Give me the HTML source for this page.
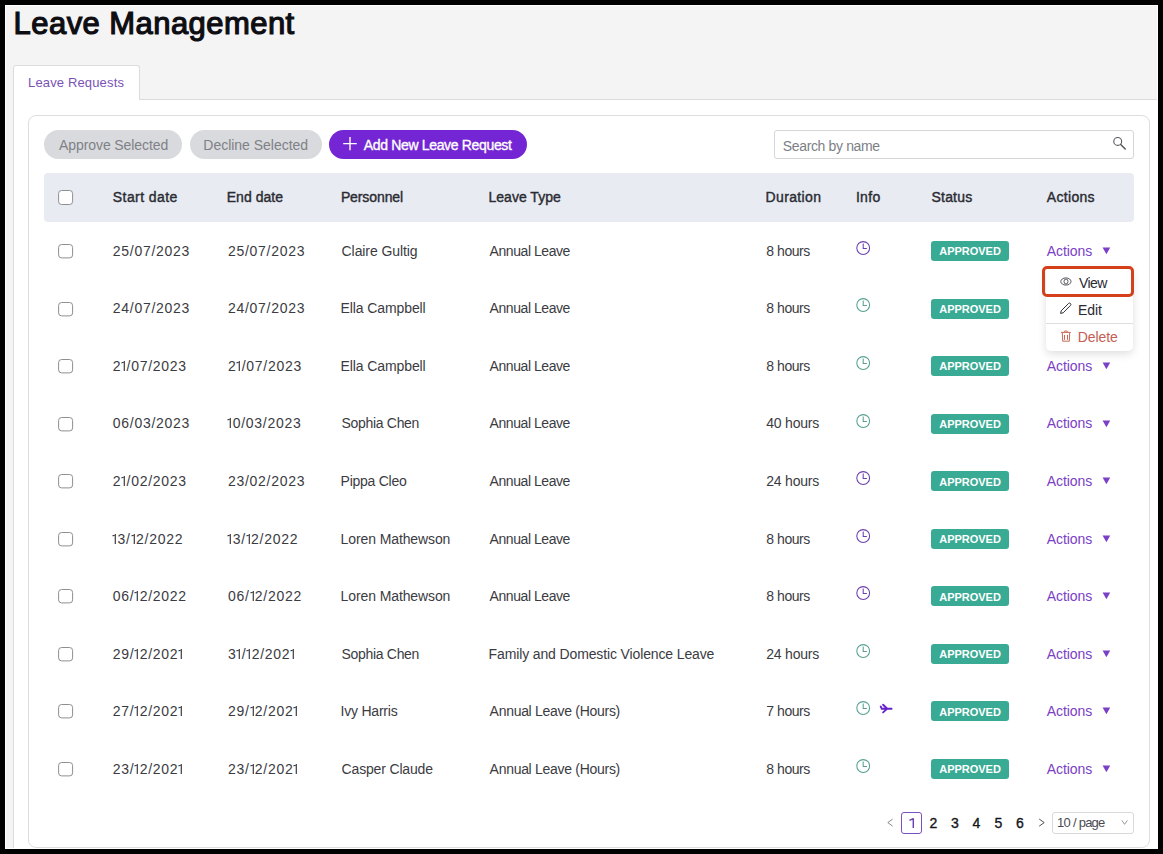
<!DOCTYPE html>
<html><head><meta charset="utf-8"><title>Leave Management</title>
<style>
*{box-sizing:border-box;margin:0;padding:0}
html,body{width:1163px;height:854px;overflow:hidden;background:#000}
body{position:relative;font-family:"Liberation Sans",sans-serif}
.a{position:absolute}
.t{position:absolute;white-space:nowrap}
.one{display:inline-block;vertical-align:baseline;overflow:visible}
.badge{left:931px;width:78px;height:20px;background:#39aa94;border-radius:3px}
</style></head>
<body>
<div class="a" style="left:5px;top:5px;width:1153px;height:844px;background:#f4f4f5"></div>
<div class="a" style="left:13px;top:99px;width:1150px;height:760px;background:#fff;border-top:1px solid #dcdcdc;border-left:1px solid #dcdcdc"></div>
<div class="a" style="left:13px;top:65px;width:127px;height:35px;background:#fff;border:1px solid #dcdcdc;border-bottom:none;border-radius:3px 3px 0 0"></div>
<div class="a" style="left:28px;top:115px;width:1122px;height:733px;background:#fff;border:1px solid #dedede;border-radius:8px"></div>
<div class="a" style="left:44px;top:130px;width:138px;height:29px;border-radius:15px;background:#d9dadd"></div>
<div class="a" style="left:190px;top:130px;width:132px;height:29px;border-radius:15px;background:#d9dadd"></div>
<div class="a" style="left:329px;top:130px;width:198px;height:29px;border-radius:15px;background:#7526d4"></div>
<svg class="a" style="left:342px;top:136px" width="16" height="16" viewBox="0 0 16 16"><path d="M8 1V14.2M1.2 7.6H14.8" stroke="#fff" stroke-width="1.4"/></svg>
<div class="a" style="left:774px;top:130px;width:360px;height:29px;border:1px solid #d6d6d9;border-radius:3px;background:#fff"></div>
<svg class="a" style="left:1110px;top:134px" width="20" height="20" viewBox="0 0 20 20"><circle cx="7.7" cy="7.4" r="3.95" fill="none" stroke="#57575e" stroke-width="1.1"/><path d="M10.7 10.5L15.2 15" stroke="#57575e" stroke-width="1.5" stroke-linecap="round"/></svg>
<div class="a" style="left:44px;top:173px;width:1090px;height:49px;background:#e8ecf2;border-radius:4px"></div>
<svg class="a" style="left:57px;top:189px" width="17" height="17" viewBox="0 0 17 17"><rect x="1.6" y="1.5" width="14" height="14" rx="3" fill="#fff" stroke="#8e8e93" stroke-width="1"/></svg>
<svg class="a" style="left:57px;top:243.00px" width="17" height="16" viewBox="0 0 17 16"><rect x="1.6" y="1.5" width="14" height="13.4" rx="3" fill="#fff" stroke="#8e8e93" stroke-width="1"/></svg>
<svg class="a" style="left:855px;top:239.90px" width="16" height="16" viewBox="0 0 16 16"><circle cx="8.2" cy="8" r="6.4" fill="none" stroke="#6c3fae" stroke-width="1.05"/><path d="M8.2 3.4V8.5H11.9" fill="none" stroke="#6c3fae" stroke-width="1.05"/></svg>
<div class="a badge" style="top:241.00px"></div>
<svg class="a" style="left:1102px;top:247.00px" width="9" height="8" viewBox="0 0 9 8"><path d="M0.6 0.4H8.2L4.4 7.2Z" fill="#7a40c6"/></svg>
<svg class="a" style="left:57px;top:300.56px" width="17" height="16" viewBox="0 0 17 16"><rect x="1.6" y="1.5" width="14" height="13.4" rx="3" fill="#fff" stroke="#8e8e93" stroke-width="1"/></svg>
<svg class="a" style="left:855px;top:297.46px" width="16" height="16" viewBox="0 0 16 16"><circle cx="8.2" cy="8" r="6.4" fill="none" stroke="#58a093" stroke-width="1.05"/><path d="M8.2 3.4V8.5H11.9" fill="none" stroke="#58a093" stroke-width="1.05"/></svg>
<div class="a badge" style="top:298.56px"></div>
<svg class="a" style="left:57px;top:358.12px" width="17" height="16" viewBox="0 0 17 16"><rect x="1.6" y="1.5" width="14" height="13.4" rx="3" fill="#fff" stroke="#8e8e93" stroke-width="1"/></svg>
<svg class="a" style="left:855px;top:355.02px" width="16" height="16" viewBox="0 0 16 16"><circle cx="8.2" cy="8" r="6.4" fill="none" stroke="#58a093" stroke-width="1.05"/><path d="M8.2 3.4V8.5H11.9" fill="none" stroke="#58a093" stroke-width="1.05"/></svg>
<div class="a badge" style="top:356.12px"></div>
<svg class="a" style="left:1102px;top:362.12px" width="9" height="8" viewBox="0 0 9 8"><path d="M0.6 0.4H8.2L4.4 7.2Z" fill="#7a40c6"/></svg>
<svg class="a" style="left:57px;top:415.68px" width="17" height="16" viewBox="0 0 17 16"><rect x="1.6" y="1.5" width="14" height="13.4" rx="3" fill="#fff" stroke="#8e8e93" stroke-width="1"/></svg>
<svg class="a" style="left:855px;top:412.58px" width="16" height="16" viewBox="0 0 16 16"><circle cx="8.2" cy="8" r="6.4" fill="none" stroke="#58a093" stroke-width="1.05"/><path d="M8.2 3.4V8.5H11.9" fill="none" stroke="#58a093" stroke-width="1.05"/></svg>
<div class="a badge" style="top:413.68px"></div>
<svg class="a" style="left:1102px;top:419.68px" width="9" height="8" viewBox="0 0 9 8"><path d="M0.6 0.4H8.2L4.4 7.2Z" fill="#7a40c6"/></svg>
<svg class="a" style="left:57px;top:473.24px" width="17" height="16" viewBox="0 0 17 16"><rect x="1.6" y="1.5" width="14" height="13.4" rx="3" fill="#fff" stroke="#8e8e93" stroke-width="1"/></svg>
<svg class="a" style="left:855px;top:470.14px" width="16" height="16" viewBox="0 0 16 16"><circle cx="8.2" cy="8" r="6.4" fill="none" stroke="#6c3fae" stroke-width="1.05"/><path d="M8.2 3.4V8.5H11.9" fill="none" stroke="#6c3fae" stroke-width="1.05"/></svg>
<div class="a badge" style="top:471.24px"></div>
<svg class="a" style="left:1102px;top:477.24px" width="9" height="8" viewBox="0 0 9 8"><path d="M0.6 0.4H8.2L4.4 7.2Z" fill="#7a40c6"/></svg>
<svg class="a" style="left:57px;top:530.80px" width="17" height="16" viewBox="0 0 17 16"><rect x="1.6" y="1.5" width="14" height="13.4" rx="3" fill="#fff" stroke="#8e8e93" stroke-width="1"/></svg>
<svg class="a" style="left:855px;top:527.70px" width="16" height="16" viewBox="0 0 16 16"><circle cx="8.2" cy="8" r="6.4" fill="none" stroke="#6c3fae" stroke-width="1.05"/><path d="M8.2 3.4V8.5H11.9" fill="none" stroke="#6c3fae" stroke-width="1.05"/></svg>
<div class="a badge" style="top:528.80px"></div>
<svg class="a" style="left:1102px;top:534.80px" width="9" height="8" viewBox="0 0 9 8"><path d="M0.6 0.4H8.2L4.4 7.2Z" fill="#7a40c6"/></svg>
<svg class="a" style="left:57px;top:588.36px" width="17" height="16" viewBox="0 0 17 16"><rect x="1.6" y="1.5" width="14" height="13.4" rx="3" fill="#fff" stroke="#8e8e93" stroke-width="1"/></svg>
<svg class="a" style="left:855px;top:585.26px" width="16" height="16" viewBox="0 0 16 16"><circle cx="8.2" cy="8" r="6.4" fill="none" stroke="#6c3fae" stroke-width="1.05"/><path d="M8.2 3.4V8.5H11.9" fill="none" stroke="#6c3fae" stroke-width="1.05"/></svg>
<div class="a badge" style="top:586.36px"></div>
<svg class="a" style="left:1102px;top:592.36px" width="9" height="8" viewBox="0 0 9 8"><path d="M0.6 0.4H8.2L4.4 7.2Z" fill="#7a40c6"/></svg>
<svg class="a" style="left:57px;top:645.92px" width="17" height="16" viewBox="0 0 17 16"><rect x="1.6" y="1.5" width="14" height="13.4" rx="3" fill="#fff" stroke="#8e8e93" stroke-width="1"/></svg>
<svg class="a" style="left:855px;top:642.82px" width="16" height="16" viewBox="0 0 16 16"><circle cx="8.2" cy="8" r="6.4" fill="none" stroke="#58a093" stroke-width="1.05"/><path d="M8.2 3.4V8.5H11.9" fill="none" stroke="#58a093" stroke-width="1.05"/></svg>
<div class="a badge" style="top:643.92px"></div>
<svg class="a" style="left:1102px;top:649.92px" width="9" height="8" viewBox="0 0 9 8"><path d="M0.6 0.4H8.2L4.4 7.2Z" fill="#7a40c6"/></svg>
<svg class="a" style="left:57px;top:703.48px" width="17" height="16" viewBox="0 0 17 16"><rect x="1.6" y="1.5" width="14" height="13.4" rx="3" fill="#fff" stroke="#8e8e93" stroke-width="1"/></svg>
<svg class="a" style="left:855px;top:700.38px" width="16" height="16" viewBox="0 0 16 16"><circle cx="8.2" cy="8" r="6.4" fill="none" stroke="#58a093" stroke-width="1.05"/><path d="M8.2 3.4V8.5H11.9" fill="none" stroke="#58a093" stroke-width="1.05"/></svg>
<svg class="a" style="left:879px;top:702.38px" width="15" height="13" viewBox="0 0 15 13"><path d="M2.6 6.7H12.6M4.1 2.7L8 6.5M8 6.9L4.1 10.4M1.7 4.5L2.8 6.7" fill="none" stroke="#6623c9" stroke-width="1.9" stroke-linecap="round" stroke-linejoin="round"/></svg>
<div class="a badge" style="top:701.48px"></div>
<svg class="a" style="left:1102px;top:707.48px" width="9" height="8" viewBox="0 0 9 8"><path d="M0.6 0.4H8.2L4.4 7.2Z" fill="#7a40c6"/></svg>
<svg class="a" style="left:57px;top:761.04px" width="17" height="16" viewBox="0 0 17 16"><rect x="1.6" y="1.5" width="14" height="13.4" rx="3" fill="#fff" stroke="#8e8e93" stroke-width="1"/></svg>
<svg class="a" style="left:855px;top:757.94px" width="16" height="16" viewBox="0 0 16 16"><circle cx="8.2" cy="8" r="6.4" fill="none" stroke="#58a093" stroke-width="1.05"/><path d="M8.2 3.4V8.5H11.9" fill="none" stroke="#58a093" stroke-width="1.05"/></svg>
<div class="a badge" style="top:759.04px"></div>
<svg class="a" style="left:1102px;top:765.04px" width="9" height="8" viewBox="0 0 9 8"><path d="M0.6 0.4H8.2L4.4 7.2Z" fill="#7a40c6"/></svg>
<div class="a" style="left:1046px;top:267px;width:87px;height:84px;background:#fff;border-radius:5px;box-shadow:0 3px 8px rgba(0,0,0,0.13)"></div>
<div class="a" style="left:1046px;top:323px;width:87px;height:1px;background:#dedede"></div>
<div class="a" style="left:1042px;top:266px;width:92px;height:31px;border:3px solid #d4401a;border-radius:5px"></div>
<svg class="a" style="left:1059px;top:277px" width="14" height="10" viewBox="0 0 14 10"><ellipse cx="6.9" cy="4.5" rx="5.1" ry="3.6" fill="none" stroke="#3c3c44" stroke-width="0.85"/><ellipse cx="7" cy="4.5" rx="2" ry="2.5" fill="none" stroke="#3c3c44" stroke-width="0.85"/></svg>
<svg class="a" style="left:1059px;top:301.3px" width="14" height="14" viewBox="0 0 14 14"><path d="M1.6 12.4L2.2 9.8L9.6 2.4Q10.6 1.6 11.5 2.5Q12.3 3.4 11.6 4.3L4.2 11.8Z" fill="none" stroke="#2f2f36" stroke-width="1"/></svg>
<svg class="a" style="left:1060px;top:330px" width="12" height="13" viewBox="0 0 12 13"><path d="M1 2.4H10.8M4.4 2.2V1.4Q4.4 1 4.8 1H6.9Q7.3 1 7.3 1.4V2.2M2.3 2.8L2.7 11.2H9.3L9.7 2.8M4.5 4.9V9.8M7.5 4.9V9.8" fill="none" stroke="#c7604f" stroke-width="0.95"/></svg>
<svg class="a" style="left:886px;top:817px" width="9" height="11" viewBox="0 0 9 11"><path d="M6.6 2.1L1.8 5.6L6.6 9.1" fill="none" stroke="#7a7a80" stroke-width="0.9"/></svg>
<div class="a" style="left:901px;top:812px;width:21px;height:22px;border:1px solid #7b4fc0;border-radius:3px"></div>
<svg class="a" style="left:1037px;top:817px" width="9" height="11" viewBox="0 0 9 11"><path d="M2.2 2L7.2 5.6L2.2 9.2" fill="none" stroke="#3a3a40" stroke-width="0.9"/></svg>
<div class="a" style="left:1052px;top:812px;width:82px;height:22px;border:1px solid #d9d9dc;border-radius:3px"></div>
<svg class="a" style="left:1120px;top:819px" width="9" height="8" viewBox="0 0 9 8"><path d="M1.8 1.4L4.6 5.3L7.4 1.4" fill="none" stroke="#85858b" stroke-width="0.85"/></svg>
<div class="t" style="left:13.60px;top:4.16px;font-size:31px;line-height:39px;font-weight:normal;color:#0d0d12;letter-spacing:0.440px;-webkit-text-stroke:1.2px #0d0d12;">Leave Management</div>
<div class="t" style="left:28.00px;top:74.50px;font-size:13px;line-height:16px;font-weight:normal;color:#7a52b4;letter-spacing:0.150px;">Leave Requests</div>
<div class="t" style="left:59.10px;top:135.85px;font-size:14px;line-height:18px;font-weight:normal;color:#7f8187;letter-spacing:-0.095px;">Approve Selected</div>
<div class="t" style="left:203.30px;top:135.85px;font-size:14px;line-height:18px;font-weight:normal;color:#7f8187;letter-spacing:-0.018px;">Decline Selected</div>
<div class="t" style="left:363.80px;top:135.65px;font-size:14px;line-height:18px;font-weight:normal;color:#ffffff;letter-spacing:-0.339px;-webkit-text-stroke:0.35px #fff;">Add New Leave Request</div>
<div class="t" style="left:782.80px;top:136.75px;font-size:14px;line-height:18px;font-weight:normal;color:#7d7f86;letter-spacing:-0.358px;">Search by name</div>
<div class="t" style="left:112.80px;top:188.15px;font-size:14px;line-height:18px;font-weight:normal;color:#2b2b33;letter-spacing:0.431px;-webkit-text-stroke:0.4px #2b2b33;">Start date</div>
<div class="t" style="left:226.70px;top:188.15px;font-size:14px;line-height:18px;font-weight:normal;color:#2b2b33;letter-spacing:0.048px;-webkit-text-stroke:0.4px #2b2b33;">End date</div>
<div class="t" style="left:340.90px;top:188.15px;font-size:14px;line-height:18px;font-weight:normal;color:#2b2b33;letter-spacing:-0.104px;-webkit-text-stroke:0.4px #2b2b33;">Personnel</div>
<div class="t" style="left:488.50px;top:188.15px;font-size:14px;line-height:18px;font-weight:normal;color:#2b2b33;letter-spacing:0.011px;-webkit-text-stroke:0.4px #2b2b33;">Leave Type</div>
<div class="t" style="left:765.60px;top:188.15px;font-size:14px;line-height:18px;font-weight:normal;color:#2b2b33;letter-spacing:0.353px;-webkit-text-stroke:0.4px #2b2b33;">Duration</div>
<div class="t" style="left:855.90px;top:188.15px;font-size:14px;line-height:18px;font-weight:normal;color:#2b2b33;letter-spacing:0.312px;-webkit-text-stroke:0.4px #2b2b33;">Info</div>
<div class="t" style="left:931.50px;top:188.15px;font-size:14px;line-height:18px;font-weight:normal;color:#2b2b33;letter-spacing:0.202px;-webkit-text-stroke:0.4px #2b2b33;">Status</div>
<div class="t" style="left:1046.80px;top:188.15px;font-size:14px;line-height:18px;font-weight:normal;color:#2b2b33;letter-spacing:0.315px;-webkit-text-stroke:0.4px #2b2b33;">Actions</div>
<div class="t" style="left:112.80px;top:241.75px;font-size:14px;line-height:18px;font-weight:normal;color:#3b3b42;letter-spacing:0.720px;">25/07/2023</div>
<div class="t" style="left:227.90px;top:241.75px;font-size:14px;line-height:18px;font-weight:normal;color:#3b3b42;letter-spacing:0.720px;">25/07/2023</div>
<div class="t" style="left:341.60px;top:241.75px;font-size:14px;line-height:18px;font-weight:normal;color:#3b3b42;letter-spacing:-0.087px;">Claire Gultig</div>
<div class="t" style="left:489.60px;top:241.75px;font-size:14px;line-height:18px;font-weight:normal;color:#3b3b42;letter-spacing:-0.440px;">Annual Leave</div>
<div class="t" style="left:766.30px;top:241.75px;font-size:14px;line-height:18px;font-weight:normal;color:#3b3b42;letter-spacing:-0.449px;">8 hours</div>
<div class="t" style="left:1046.70px;top:241.75px;font-size:14px;line-height:18px;font-weight:normal;color:#7a40c6;letter-spacing:-0.068px;">Actions</div>
<div class="t" style="left:939.30px;top:244.29px;font-size:11px;line-height:14px;font-weight:bold;color:#ffffff;letter-spacing:-0.027px;">APPROVED</div>
<div class="t" style="left:112.80px;top:299.31px;font-size:14px;line-height:18px;font-weight:normal;color:#3b3b42;letter-spacing:0.720px;">24/07/2023</div>
<div class="t" style="left:227.90px;top:299.31px;font-size:14px;line-height:18px;font-weight:normal;color:#3b3b42;letter-spacing:0.720px;">24/07/2023</div>
<div class="t" style="left:340.60px;top:299.31px;font-size:14px;line-height:18px;font-weight:normal;color:#3b3b42;letter-spacing:-0.105px;">Ella Campbell</div>
<div class="t" style="left:489.60px;top:299.31px;font-size:14px;line-height:18px;font-weight:normal;color:#3b3b42;letter-spacing:-0.440px;">Annual Leave</div>
<div class="t" style="left:766.30px;top:299.31px;font-size:14px;line-height:18px;font-weight:normal;color:#3b3b42;letter-spacing:-0.449px;">8 hours</div>
<div class="t" style="left:939.30px;top:301.85px;font-size:11px;line-height:14px;font-weight:bold;color:#ffffff;letter-spacing:-0.027px;">APPROVED</div>
<div class="t" style="left:112.80px;top:356.87px;font-size:14px;line-height:18px;font-weight:normal;color:#3b3b42;letter-spacing:0.720px;">2<svg class="one" width="5.3" height="10" viewBox="0 0 5.3 10"><path d="M3.3 0.1V10M3.4 0.5L0.5 2" fill="none" stroke="currentColor" stroke-width="1.2"/></svg>/07/2023</div>
<div class="t" style="left:227.90px;top:356.87px;font-size:14px;line-height:18px;font-weight:normal;color:#3b3b42;letter-spacing:0.720px;">2<svg class="one" width="5.3" height="10" viewBox="0 0 5.3 10"><path d="M3.3 0.1V10M3.4 0.5L0.5 2" fill="none" stroke="currentColor" stroke-width="1.2"/></svg>/07/2023</div>
<div class="t" style="left:340.60px;top:356.87px;font-size:14px;line-height:18px;font-weight:normal;color:#3b3b42;letter-spacing:-0.105px;">Ella Campbell</div>
<div class="t" style="left:489.60px;top:356.87px;font-size:14px;line-height:18px;font-weight:normal;color:#3b3b42;letter-spacing:-0.440px;">Annual Leave</div>
<div class="t" style="left:766.30px;top:356.87px;font-size:14px;line-height:18px;font-weight:normal;color:#3b3b42;letter-spacing:-0.449px;">8 hours</div>
<div class="t" style="left:1046.70px;top:356.87px;font-size:14px;line-height:18px;font-weight:normal;color:#7a40c6;letter-spacing:-0.068px;">Actions</div>
<div class="t" style="left:939.30px;top:359.41px;font-size:11px;line-height:14px;font-weight:bold;color:#ffffff;letter-spacing:-0.027px;">APPROVED</div>
<div class="t" style="left:112.80px;top:414.43px;font-size:14px;line-height:18px;font-weight:normal;color:#3b3b42;letter-spacing:0.720px;">06/03/2023</div>
<div class="t" style="left:227.40px;top:414.43px;font-size:14px;line-height:18px;font-weight:normal;color:#3b3b42;letter-spacing:0.720px;"><svg class="one" width="5.3" height="10" viewBox="0 0 5.3 10"><path d="M3.3 0.1V10M3.4 0.5L0.5 2" fill="none" stroke="currentColor" stroke-width="1.2"/></svg>0/03/2023</div>
<div class="t" style="left:341.60px;top:414.43px;font-size:14px;line-height:18px;font-weight:normal;color:#3b3b42;letter-spacing:-0.317px;">Sophia Chen</div>
<div class="t" style="left:489.60px;top:414.43px;font-size:14px;line-height:18px;font-weight:normal;color:#3b3b42;letter-spacing:-0.440px;">Annual Leave</div>
<div class="t" style="left:766.30px;top:414.43px;font-size:14px;line-height:18px;font-weight:normal;color:#3b3b42;letter-spacing:-0.212px;">40 hours</div>
<div class="t" style="left:1046.70px;top:414.43px;font-size:14px;line-height:18px;font-weight:normal;color:#7a40c6;letter-spacing:-0.068px;">Actions</div>
<div class="t" style="left:939.30px;top:416.97px;font-size:11px;line-height:14px;font-weight:bold;color:#ffffff;letter-spacing:-0.027px;">APPROVED</div>
<div class="t" style="left:112.80px;top:471.99px;font-size:14px;line-height:18px;font-weight:normal;color:#3b3b42;letter-spacing:0.720px;">2<svg class="one" width="5.3" height="10" viewBox="0 0 5.3 10"><path d="M3.3 0.1V10M3.4 0.5L0.5 2" fill="none" stroke="currentColor" stroke-width="1.2"/></svg>/02/2023</div>
<div class="t" style="left:227.90px;top:471.99px;font-size:14px;line-height:18px;font-weight:normal;color:#3b3b42;letter-spacing:0.720px;">23/02/2023</div>
<div class="t" style="left:340.60px;top:471.99px;font-size:14px;line-height:18px;font-weight:normal;color:#3b3b42;letter-spacing:-0.263px;">Pippa Cleo</div>
<div class="t" style="left:489.60px;top:471.99px;font-size:14px;line-height:18px;font-weight:normal;color:#3b3b42;letter-spacing:-0.440px;">Annual Leave</div>
<div class="t" style="left:766.30px;top:471.99px;font-size:14px;line-height:18px;font-weight:normal;color:#3b3b42;letter-spacing:-0.212px;">24 hours</div>
<div class="t" style="left:1046.70px;top:471.99px;font-size:14px;line-height:18px;font-weight:normal;color:#7a40c6;letter-spacing:-0.068px;">Actions</div>
<div class="t" style="left:939.30px;top:474.53px;font-size:11px;line-height:14px;font-weight:bold;color:#ffffff;letter-spacing:-0.027px;">APPROVED</div>
<div class="t" style="left:112.30px;top:529.55px;font-size:14px;line-height:18px;font-weight:normal;color:#3b3b42;letter-spacing:0.720px;"><svg class="one" width="5.3" height="10" viewBox="0 0 5.3 10"><path d="M3.3 0.1V10M3.4 0.5L0.5 2" fill="none" stroke="currentColor" stroke-width="1.2"/></svg>3/<svg class="one" width="5.3" height="10" viewBox="0 0 5.3 10"><path d="M3.3 0.1V10M3.4 0.5L0.5 2" fill="none" stroke="currentColor" stroke-width="1.2"/></svg>2/2022</div>
<div class="t" style="left:227.40px;top:529.55px;font-size:14px;line-height:18px;font-weight:normal;color:#3b3b42;letter-spacing:0.720px;"><svg class="one" width="5.3" height="10" viewBox="0 0 5.3 10"><path d="M3.3 0.1V10M3.4 0.5L0.5 2" fill="none" stroke="currentColor" stroke-width="1.2"/></svg>3/<svg class="one" width="5.3" height="10" viewBox="0 0 5.3 10"><path d="M3.3 0.1V10M3.4 0.5L0.5 2" fill="none" stroke="currentColor" stroke-width="1.2"/></svg>2/2022</div>
<div class="t" style="left:340.60px;top:529.55px;font-size:14px;line-height:18px;font-weight:normal;color:#3b3b42;letter-spacing:-0.107px;">Loren Mathewson</div>
<div class="t" style="left:489.60px;top:529.55px;font-size:14px;line-height:18px;font-weight:normal;color:#3b3b42;letter-spacing:-0.440px;">Annual Leave</div>
<div class="t" style="left:766.30px;top:529.55px;font-size:14px;line-height:18px;font-weight:normal;color:#3b3b42;letter-spacing:-0.449px;">8 hours</div>
<div class="t" style="left:1046.70px;top:529.55px;font-size:14px;line-height:18px;font-weight:normal;color:#7a40c6;letter-spacing:-0.068px;">Actions</div>
<div class="t" style="left:939.30px;top:532.09px;font-size:11px;line-height:14px;font-weight:bold;color:#ffffff;letter-spacing:-0.027px;">APPROVED</div>
<div class="t" style="left:112.80px;top:587.11px;font-size:14px;line-height:18px;font-weight:normal;color:#3b3b42;letter-spacing:0.720px;">06/<svg class="one" width="5.3" height="10" viewBox="0 0 5.3 10"><path d="M3.3 0.1V10M3.4 0.5L0.5 2" fill="none" stroke="currentColor" stroke-width="1.2"/></svg>2/2022</div>
<div class="t" style="left:227.90px;top:587.11px;font-size:14px;line-height:18px;font-weight:normal;color:#3b3b42;letter-spacing:0.720px;">06/<svg class="one" width="5.3" height="10" viewBox="0 0 5.3 10"><path d="M3.3 0.1V10M3.4 0.5L0.5 2" fill="none" stroke="currentColor" stroke-width="1.2"/></svg>2/2022</div>
<div class="t" style="left:340.60px;top:587.11px;font-size:14px;line-height:18px;font-weight:normal;color:#3b3b42;letter-spacing:-0.107px;">Loren Mathewson</div>
<div class="t" style="left:489.60px;top:587.11px;font-size:14px;line-height:18px;font-weight:normal;color:#3b3b42;letter-spacing:-0.440px;">Annual Leave</div>
<div class="t" style="left:766.30px;top:587.11px;font-size:14px;line-height:18px;font-weight:normal;color:#3b3b42;letter-spacing:-0.449px;">8 hours</div>
<div class="t" style="left:1046.70px;top:587.11px;font-size:14px;line-height:18px;font-weight:normal;color:#7a40c6;letter-spacing:-0.068px;">Actions</div>
<div class="t" style="left:939.30px;top:589.65px;font-size:11px;line-height:14px;font-weight:bold;color:#ffffff;letter-spacing:-0.027px;">APPROVED</div>
<div class="t" style="left:112.80px;top:644.67px;font-size:14px;line-height:18px;font-weight:normal;color:#3b3b42;letter-spacing:0.720px;">29/<svg class="one" width="5.3" height="10" viewBox="0 0 5.3 10"><path d="M3.3 0.1V10M3.4 0.5L0.5 2" fill="none" stroke="currentColor" stroke-width="1.2"/></svg>2/202<svg class="one" width="5.3" height="10" viewBox="0 0 5.3 10"><path d="M3.3 0.1V10M3.4 0.5L0.5 2" fill="none" stroke="currentColor" stroke-width="1.2"/></svg></div>
<div class="t" style="left:227.90px;top:644.67px;font-size:14px;line-height:18px;font-weight:normal;color:#3b3b42;letter-spacing:0.720px;">3<svg class="one" width="5.3" height="10" viewBox="0 0 5.3 10"><path d="M3.3 0.1V10M3.4 0.5L0.5 2" fill="none" stroke="currentColor" stroke-width="1.2"/></svg>/<svg class="one" width="5.3" height="10" viewBox="0 0 5.3 10"><path d="M3.3 0.1V10M3.4 0.5L0.5 2" fill="none" stroke="currentColor" stroke-width="1.2"/></svg>2/202<svg class="one" width="5.3" height="10" viewBox="0 0 5.3 10"><path d="M3.3 0.1V10M3.4 0.5L0.5 2" fill="none" stroke="currentColor" stroke-width="1.2"/></svg></div>
<div class="t" style="left:341.60px;top:644.67px;font-size:14px;line-height:18px;font-weight:normal;color:#3b3b42;letter-spacing:-0.317px;">Sophia Chen</div>
<div class="t" style="left:488.60px;top:644.67px;font-size:14px;line-height:18px;font-weight:normal;color:#3b3b42;letter-spacing:-0.130px;">Family and Domestic Violence Leave</div>
<div class="t" style="left:766.30px;top:644.67px;font-size:14px;line-height:18px;font-weight:normal;color:#3b3b42;letter-spacing:-0.212px;">24 hours</div>
<div class="t" style="left:1046.70px;top:644.67px;font-size:14px;line-height:18px;font-weight:normal;color:#7a40c6;letter-spacing:-0.068px;">Actions</div>
<div class="t" style="left:939.30px;top:647.21px;font-size:11px;line-height:14px;font-weight:bold;color:#ffffff;letter-spacing:-0.027px;">APPROVED</div>
<div class="t" style="left:112.80px;top:702.23px;font-size:14px;line-height:18px;font-weight:normal;color:#3b3b42;letter-spacing:0.720px;">27/<svg class="one" width="5.3" height="10" viewBox="0 0 5.3 10"><path d="M3.3 0.1V10M3.4 0.5L0.5 2" fill="none" stroke="currentColor" stroke-width="1.2"/></svg>2/202<svg class="one" width="5.3" height="10" viewBox="0 0 5.3 10"><path d="M3.3 0.1V10M3.4 0.5L0.5 2" fill="none" stroke="currentColor" stroke-width="1.2"/></svg></div>
<div class="t" style="left:227.90px;top:702.23px;font-size:14px;line-height:18px;font-weight:normal;color:#3b3b42;letter-spacing:0.720px;">29/<svg class="one" width="5.3" height="10" viewBox="0 0 5.3 10"><path d="M3.3 0.1V10M3.4 0.5L0.5 2" fill="none" stroke="currentColor" stroke-width="1.2"/></svg>2/202<svg class="one" width="5.3" height="10" viewBox="0 0 5.3 10"><path d="M3.3 0.1V10M3.4 0.5L0.5 2" fill="none" stroke="currentColor" stroke-width="1.2"/></svg></div>
<div class="t" style="left:340.60px;top:702.23px;font-size:14px;line-height:18px;font-weight:normal;color:#3b3b42;letter-spacing:-0.226px;">Ivy Harris</div>
<div class="t" style="left:489.60px;top:702.23px;font-size:14px;line-height:18px;font-weight:normal;color:#3b3b42;letter-spacing:-0.291px;">Annual Leave (Hours)</div>
<div class="t" style="left:766.30px;top:702.23px;font-size:14px;line-height:18px;font-weight:normal;color:#3b3b42;letter-spacing:-0.449px;">7 hours</div>
<div class="t" style="left:1046.70px;top:702.23px;font-size:14px;line-height:18px;font-weight:normal;color:#7a40c6;letter-spacing:-0.068px;">Actions</div>
<div class="t" style="left:939.30px;top:704.77px;font-size:11px;line-height:14px;font-weight:bold;color:#ffffff;letter-spacing:-0.027px;">APPROVED</div>
<div class="t" style="left:112.80px;top:759.79px;font-size:14px;line-height:18px;font-weight:normal;color:#3b3b42;letter-spacing:0.720px;">23/<svg class="one" width="5.3" height="10" viewBox="0 0 5.3 10"><path d="M3.3 0.1V10M3.4 0.5L0.5 2" fill="none" stroke="currentColor" stroke-width="1.2"/></svg>2/202<svg class="one" width="5.3" height="10" viewBox="0 0 5.3 10"><path d="M3.3 0.1V10M3.4 0.5L0.5 2" fill="none" stroke="currentColor" stroke-width="1.2"/></svg></div>
<div class="t" style="left:227.90px;top:759.79px;font-size:14px;line-height:18px;font-weight:normal;color:#3b3b42;letter-spacing:0.720px;">23/<svg class="one" width="5.3" height="10" viewBox="0 0 5.3 10"><path d="M3.3 0.1V10M3.4 0.5L0.5 2" fill="none" stroke="currentColor" stroke-width="1.2"/></svg>2/202<svg class="one" width="5.3" height="10" viewBox="0 0 5.3 10"><path d="M3.3 0.1V10M3.4 0.5L0.5 2" fill="none" stroke="currentColor" stroke-width="1.2"/></svg></div>
<div class="t" style="left:341.60px;top:759.79px;font-size:14px;line-height:18px;font-weight:normal;color:#3b3b42;letter-spacing:-0.167px;">Casper Claude</div>
<div class="t" style="left:489.60px;top:759.79px;font-size:14px;line-height:18px;font-weight:normal;color:#3b3b42;letter-spacing:-0.291px;">Annual Leave (Hours)</div>
<div class="t" style="left:766.30px;top:759.79px;font-size:14px;line-height:18px;font-weight:normal;color:#3b3b42;letter-spacing:-0.449px;">8 hours</div>
<div class="t" style="left:1046.70px;top:759.79px;font-size:14px;line-height:18px;font-weight:normal;color:#7a40c6;letter-spacing:-0.068px;">Actions</div>
<div class="t" style="left:939.30px;top:762.33px;font-size:11px;line-height:14px;font-weight:bold;color:#ffffff;letter-spacing:-0.027px;">APPROVED</div>
<div class="t" style="left:1079.00px;top:273.75px;font-size:14px;line-height:18px;font-weight:normal;color:#2a2a33;letter-spacing:-0.560px;">View</div>
<div class="t" style="left:1078.00px;top:300.95px;font-size:14px;line-height:18px;font-weight:normal;color:#2a2a33;letter-spacing:-0.078px;">Edit</div>
<div class="t" style="left:1077.80px;top:328.15px;font-size:14px;line-height:18px;font-weight:normal;color:#c45d52;letter-spacing:-0.077px;">Delete</div>
<div class="t" style="left:1057.10px;top:814.50px;font-size:13px;line-height:16px;font-weight:normal;color:#4a4a52;letter-spacing:-0.748px;">10 / page</div>
<svg class="a" style="left:909px;top:818px" width="6" height="10" viewBox="0 0 6 10"><path d="M4.3 0.3V10M4.4 0.6L0.5 2.4" fill="none" stroke="#6b3fb5" stroke-width="1.45"/></svg>
<div class="t" style="left:929.5px;top:815px;font-size:14px;line-height:17px;color:#15151a;-webkit-text-stroke:0.35px #15151a">2</div>
<div class="t" style="left:951px;top:815px;font-size:14px;line-height:17px;color:#15151a;-webkit-text-stroke:0.35px #15151a">3</div>
<div class="t" style="left:972.5px;top:815px;font-size:14px;line-height:17px;color:#15151a;-webkit-text-stroke:0.35px #15151a">4</div>
<div class="t" style="left:994.5px;top:815px;font-size:14px;line-height:17px;color:#15151a;-webkit-text-stroke:0.35px #15151a">5</div>
<div class="t" style="left:1016px;top:815px;font-size:14px;line-height:17px;color:#15151a;-webkit-text-stroke:0.35px #15151a">6</div>
<div class="a" style="left:0;top:0;width:1163px;height:5px;background:#000"></div>
<div class="a" style="left:0;top:849px;width:1163px;height:5px;background:#000"></div>
<div class="a" style="left:0;top:0;width:5px;height:854px;background:#000"></div>
<div class="a" style="left:1158px;top:0;width:5px;height:854px;background:#000"></div>
<div class="a" style="left:5px;top:5px;width:1153px;height:1px;background:#fff"></div>
<div class="a" style="left:5px;top:5px;width:1px;height:844px;background:#fff"></div>
<div class="a" style="left:1157px;top:5px;width:1px;height:844px;background:#fff"></div>
<div class="a" style="left:5px;top:848px;width:1153px;height:1px;background:#fff"></div>
</body></html>
